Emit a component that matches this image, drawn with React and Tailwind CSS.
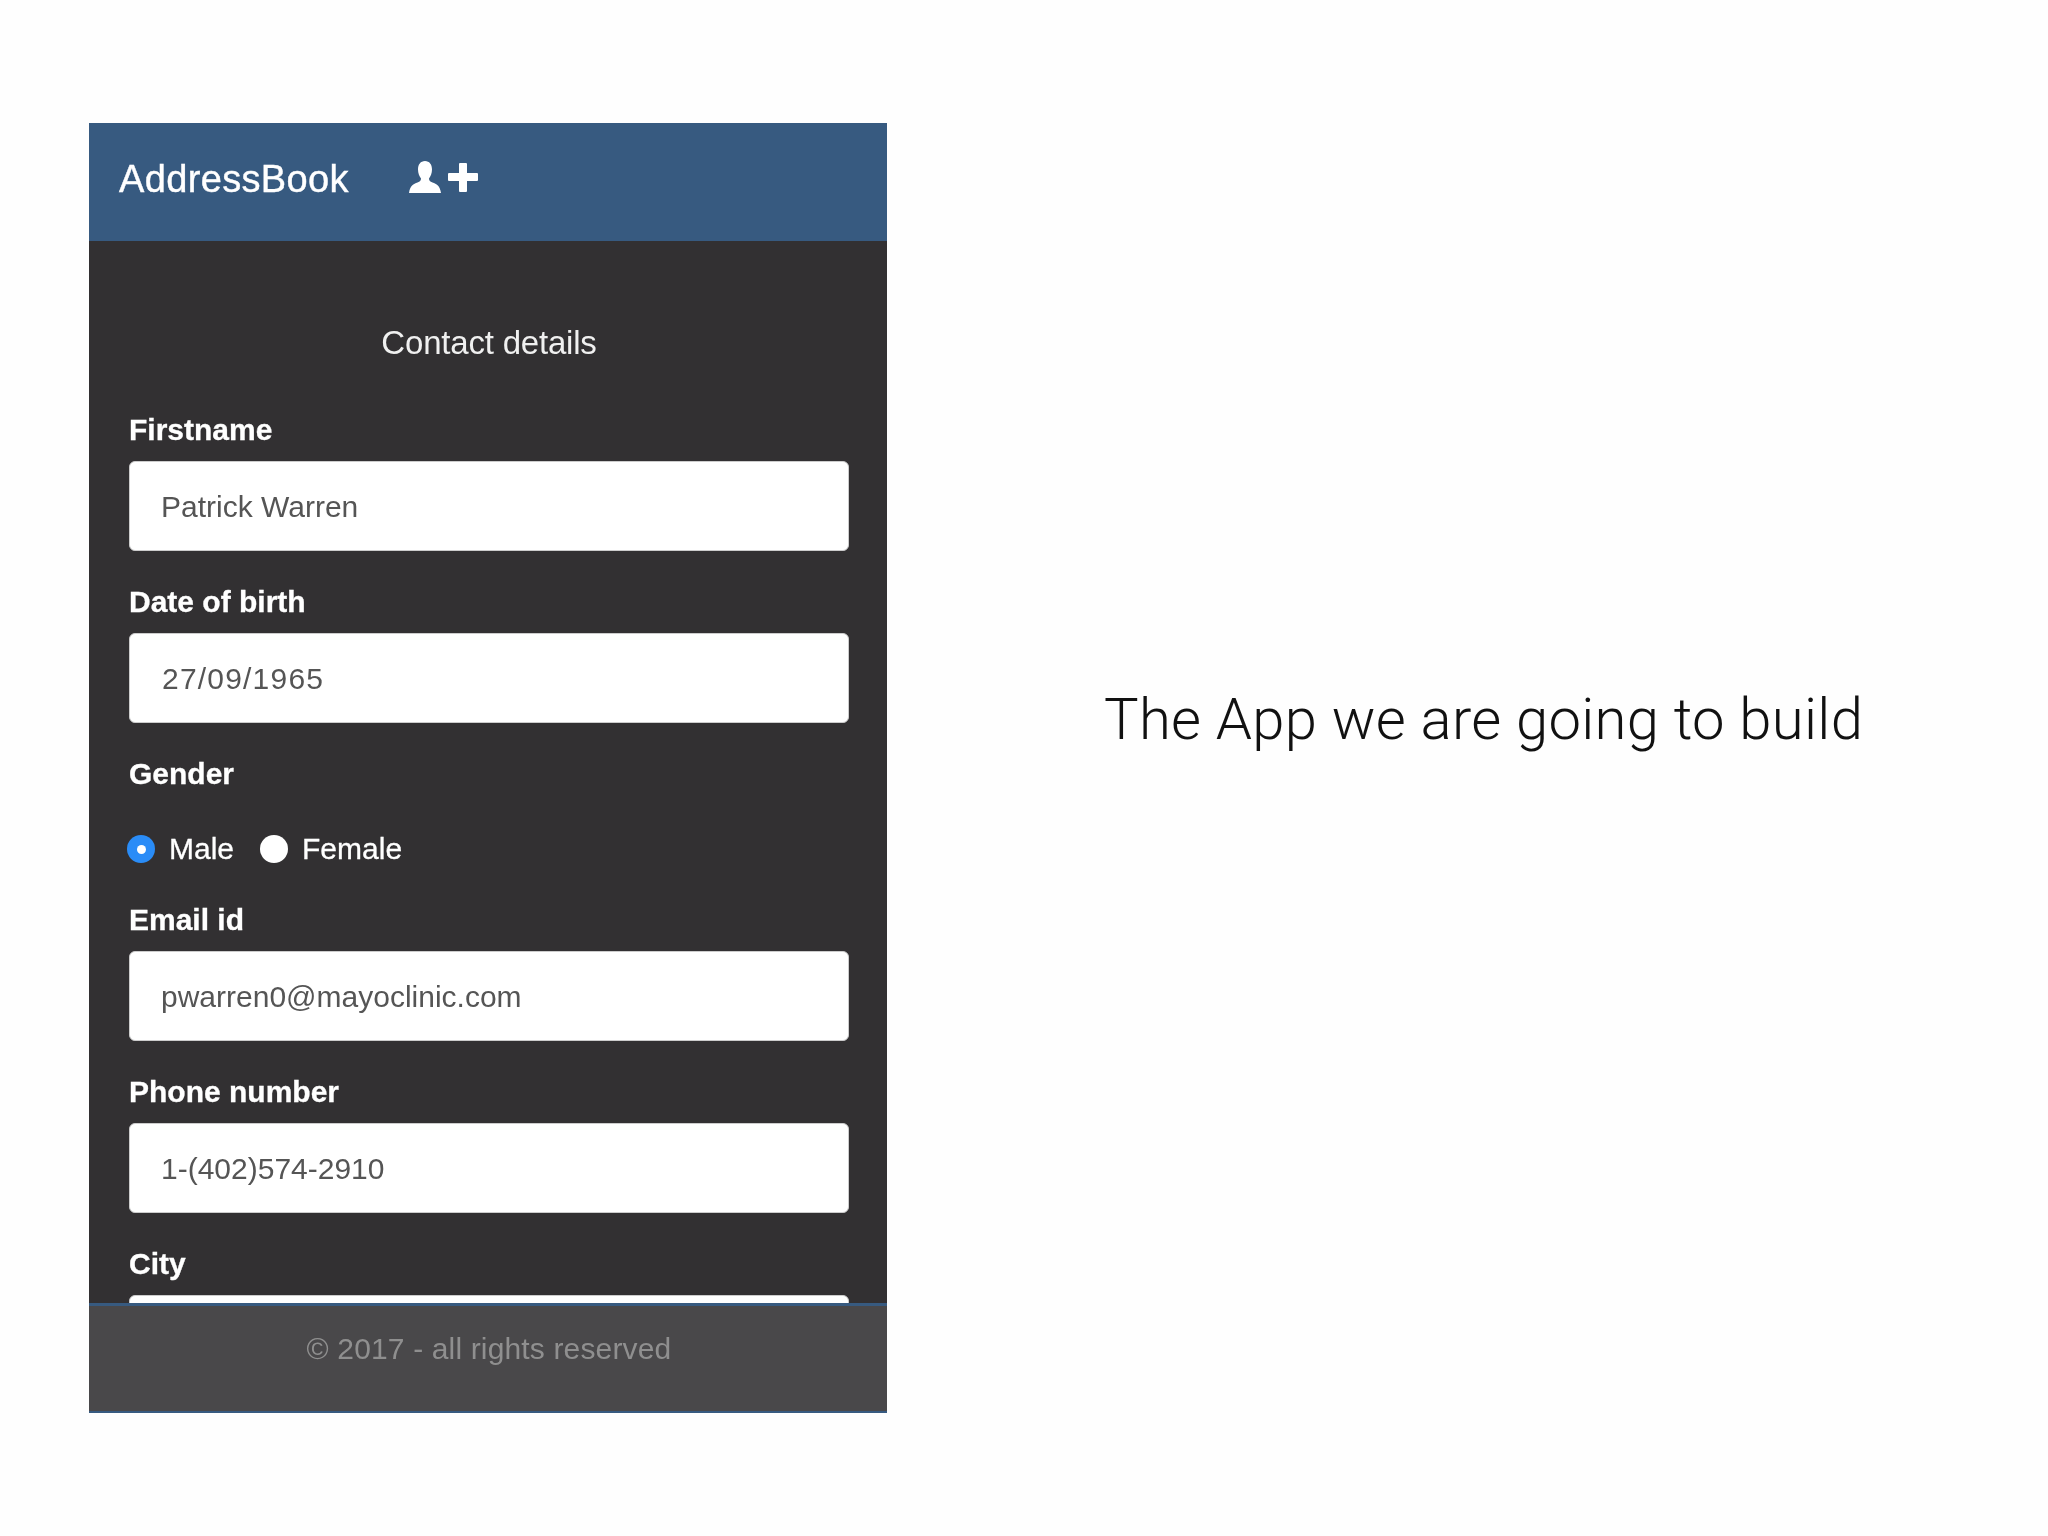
const Field = ({ label, value, valueClass = "px-[31px]" }) => (
  <div className="mb-[30px]">
    <label className="block mb-[10px] text-[30px] leading-[42px] font-bold text-white [-webkit-text-stroke:0.3px_white]">{label}</label>
    <input
      readOnly
      value={value}
      className={`block w-full h-[90px] pt-[2px] rounded-[6px] bg-white border border-[#cccccc] text-[30px] text-[#555555] outline-none ${valueClass}`}
    />
  </div>
);

const Radio = ({ checked, label }) => (
  <div className="flex items-center gap-[14px]">
    {checked ? (
      <span className="w-[28px] h-[28px] rounded-full bg-[#2a8cf7] flex items-center justify-center">
        <span className="w-[9px] h-[9px] rounded-full bg-white"></span>
      </span>
    ) : (
      <span className="w-[28px] h-[28px] rounded-full bg-white"></span>
    )}
    <span className="text-[30px] leading-[42px] text-white [-webkit-text-stroke:0.3px_white]">{label}</span>
  </div>
);

const AddUserIcon = () => (
  <svg width="70" height="32" viewBox="0 0 70 32" fill="white">
    <path d="M17 0c4.500 0 7 3.500 7 8.500 0 4-1.500 7-3 9 0 2 1 3 3.500 4 4 1.500 7.500 3 8.500 10.500H1c1-7.500 4.500-9 8.500-10.500 2.500-1 3.500-2 3.500-4-1.500-2-3-5-3-9C10 3.500 12.500 0 17 0z" />
    <rect x="40" y="12" width="30" height="8" rx="1" />
    <rect x="51" y="2" width="8" height="29" rx="1" />
  </svg>
);

export default function App() {
  return (
    <div className="flex min-h-[1536px] bg-[#fefefe] pt-[123px] pl-[89px] font-['Liberation_Sans',sans-serif]">
      <div className="w-[798px] h-[1290px] flex flex-col bg-[#323032] shrink-0 blur-[0.5px]">
        {/* Header */}
        <header className="h-[118px] shrink-0 bg-[#375a80] flex items-center pl-[30px] pb-[5px]">
          <span className="text-[38px] text-white tracking-[0.35px] [-webkit-text-stroke:0.4px_white]">AddressBook</span>
          <span className="ml-[59px] -mt-[6px]">
            <AddUserIcon />
          </span>
        </header>

        {/* Form */}
        <main className="flex-1 overflow-hidden pl-[40px] pr-[38px] pt-[79px]">
          <h2 className="mb-[43px] text-center text-[33px] leading-[46px] text-[#f0f0f0] tracking-[-0.2px]">Contact details</h2>
          <Field label="Firstname" value="Patrick Warren" />
          <Field label="Date of birth" value="27/09/1965" valueClass="px-[32px] tracking-[1.2px]" />
          <div className="mb-[29px]">
            <label className="block text-[30px] leading-[42px] font-bold text-white [-webkit-text-stroke:0.3px_white]">Gender</label>
            <div className="flex items-center gap-[26px] mt-[33px] -ml-[2px]">
              <Radio checked label="Male" />
              <Radio label="Female" />
            </div>
          </div>
          <Field label="Email id" value="pwarren0@mayoclinic.com" />
          <Field label="Phone number" value="1-(402)574-2910" />
          <Field label="City" value="" />
        </main>

        {/* Footer */}
        <footer className="h-[110px] shrink-0 bg-[#49484a] border-t-[3px] border-b-[2px] border-[#375a80] flex justify-center pt-[22px] pl-[2px] text-[30px] leading-[42px] tracking-[0.15px] text-[#8f8f8f]">
          © 2017 - all rights reserved
        </footer>
      </div>

      <p className="ml-[217px] mt-[560px] text-[58px] leading-[72px] font-light tracking-[0.3px] text-[#111111] whitespace-nowrap font-['Roboto',sans-serif]">
        The App we are going to build
      </p>
    </div>
  );
}
